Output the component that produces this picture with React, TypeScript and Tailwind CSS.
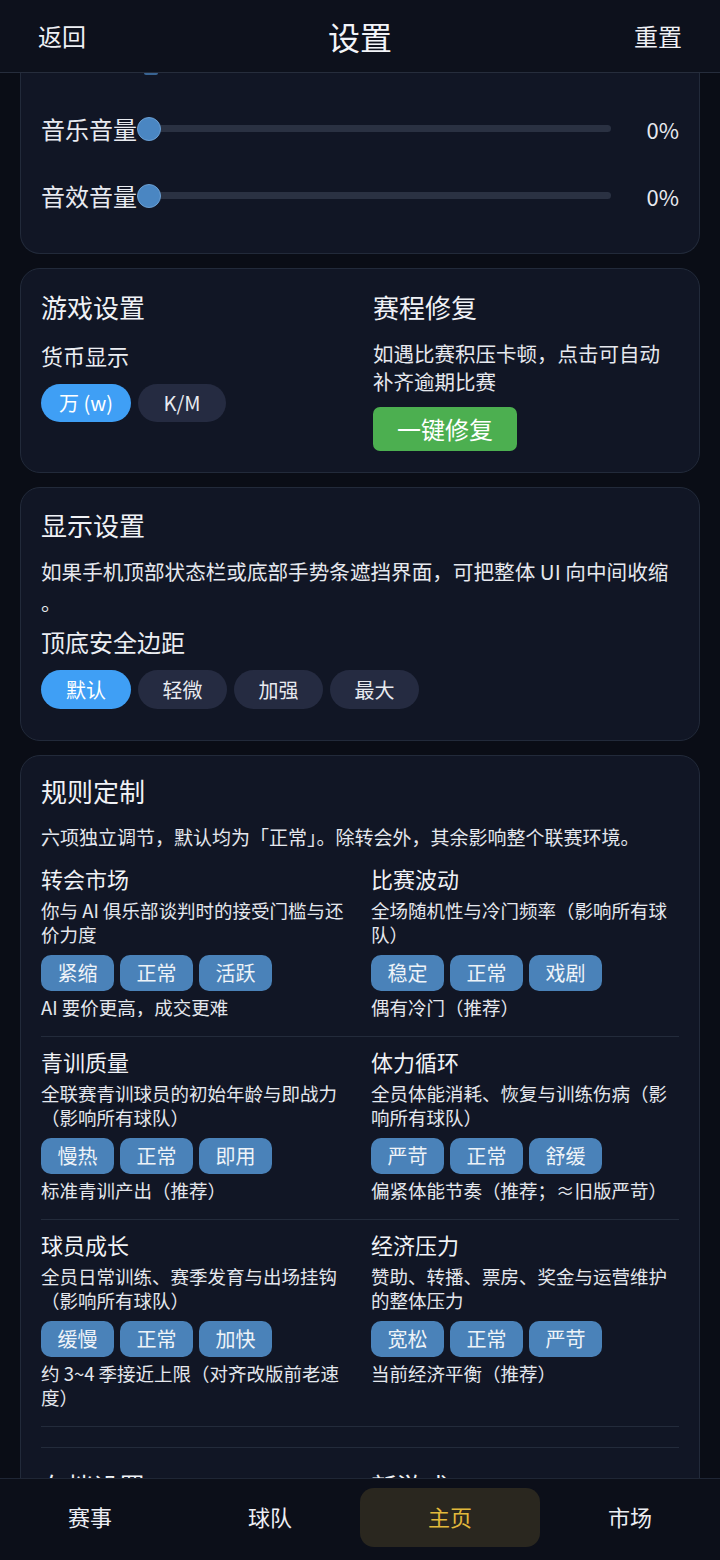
import React from "react";

type Rule = { title: string; desc: string; opts: string[]; result: React.ReactNode };

const rows: Rule[][] = [
  [
    { title: "转会市场", desc: "你与 AI 俱乐部谈判时的接受门槛与还价力度", opts: ["紧缩", "正常", "活跃"], result: "AI 要价更高，成交更难" },
    { title: "比赛波动", desc: "全场随机性与冷门频率（影响所有球队）", opts: ["稳定", "正常", "戏剧"], result: "偶有冷门（推荐）" },
  ],
  [
    { title: "青训质量", desc: "全联赛青训球员的初始年龄与即战力（影响所有球队）", opts: ["慢热", "正常", "即用"], result: "标准青训产出（推荐）" },
    { title: "体力循环", desc: "全员体能消耗、恢复与训练伤病（影响所有球队）", opts: ["严苛", "正常", "舒缓"], result: "偏紧体能节奏（推荐；≈旧版严苛）" },
  ],
  [
    { title: "球员成长", desc: "全员日常训练、赛季发育与出场挂钩（影响所有球队）", opts: ["缓慢", "正常", "加快"], result: "约 3~4 季接近上限（对齐改版前老速度）" },
    { title: "经济压力", desc: "赞助、转播、票房、奖金与运营维护的整体压力", opts: ["宽松", "正常", "严苛"], result: "当前经济平衡（推荐）" },
  ],
];

function Slider({ label }: { label: string }) {
  return (
    <div className="flex h-[67px] items-center">
      <span className="text-[24px] leading-[32px] text-[#e8eaf0]">{label}</span>
      <div className="relative flex h-[24px] flex-1 items-center">
        <div className="ml-[11px] mr-[2px] h-[7px] flex-1 rounded-full bg-[#2a3142]" />
        <div className="absolute left-0 top-0 h-[24px] w-[24px] rounded-full border border-[#6b9fd3] bg-[#4a86c2]" />
      </div>
      <span className="w-[66px] text-right text-[22px] leading-[30px] text-[#e8eaf0]">0%</span>
    </div>
  );
}

function RuleCol({ r }: { r: Rule }) {
  return (
    <div className="min-w-0">
      <div className="text-[22px] leading-[30px] text-[#f0f2f6]">{r.title}</div>
      <div className="mt-[5px] text-[18.5px] leading-[24px] text-[#e4e7ed]">{r.desc}</div>
      <div className="mt-[9px] flex gap-[6px]">
        {r.opts.map((o) => (
          <div
            key={o}
            className="flex h-[36px] w-[73px] items-center justify-center rounded-[10px] bg-[#4a82b9] text-[20px] text-[#eef3f8]"
          >
            {o}
          </div>
        ))}
      </div>
      <div className="mt-[4px] text-[18.5px] leading-[24px] text-[#e4e7ed]">{r.result}</div>
    </div>
  );
}

export default function App() {
  return (
    <div className="flex h-[1560px] w-[720px] flex-col overflow-hidden bg-[#0a0d16] font-['Noto_Sans_CJK_SC',sans-serif] text-[#e8eaf0]">
      {/* header */}
      <div className="relative z-10 flex h-[73px] shrink-0 items-center justify-between border-b border-[#262d3c] bg-[#0d111c] px-[38px]">
        <span className="text-[24px] leading-[32px] text-[#eef0f4]">返回</span>
        <span className="absolute left-1/2 -translate-x-1/2 text-[32px] leading-[40px] text-[#f2f4f8]">设置</span>
        <span className="text-[24px] leading-[32px] text-[#eef0f4]">重置</span>
      </div>

      {/* scrolling content (scrolled: first card's top is above the fold) */}
      <div className="flex-1 overflow-hidden">
        <div className="flex flex-col gap-[14px] px-[20px]">
          {/* audio card (top cut off by scroll) */}
          <div className="rounded-b-[20px] border-x border-b border-[#222a3a] bg-[#111625] px-[20px] pb-[24px]">
            <div className="ml-[103px] h-[2px] w-[14px] rounded-b-full bg-[#4a86c2]/70" />
            <div className="mt-[20px]">
              <Slider label="音乐音量" />
              <Slider label="音效音量" />
            </div>
          </div>

          {/* game settings */}
          <div className="grid grid-cols-2 gap-x-[26px] rounded-[20px] border border-[#222a3a] bg-[#111625] px-[20px] pb-[21px] pt-[20px]">
            <div>
              <div className="text-[26px] leading-[36px] text-[#f0f2f6]">游戏设置</div>
              <div className="mt-[14px] text-[22px] leading-[32px] text-[#eceef3]">货币显示</div>
              <div className="mt-[13px] flex gap-[7px]">
                <div className="flex h-[38px] w-[90px] items-center justify-center rounded-full bg-[#3f9ff5] text-[20px] text-white">万 (w)</div>
                <div className="flex h-[38px] w-[88px] items-center justify-center rounded-full bg-[#252b41] text-[20px] text-[#e8eaf0]">K/M</div>
              </div>
            </div>
            <div>
              <div className="text-[26px] leading-[36px] text-[#f0f2f6]">赛程修复</div>
              <div className="mt-[14px] text-[20.5px] leading-[28px] text-[#e6e8ee]">如遇比赛积压卡顿，点击可自动补齐逾期比赛</div>
              <div className="mt-[12px] flex h-[44px] w-[144px] items-center justify-center rounded-[7px] bg-[#4caf50] text-[24px] text-white">一键修复</div>
            </div>
          </div>

          {/* display settings */}
          <div className="rounded-[20px] border border-[#222a3a] bg-[#111625] px-[20px] pb-[31px] pt-[19px]">
            <div className="text-[26px] leading-[36px] text-[#f0f2f6]">显示设置</div>
            <div className="mt-[13px] text-[20.6px] leading-[31px] text-[#e6e8ee]">
              如果手机顶部状态栏或底部手势条遮挡界面，可把整体 UI 向中间收缩
              <br />。
            </div>
            <div className="mt-[7px] text-[24px] leading-[34px] text-[#eceef3]">顶底安全边距</div>
            <div className="mt-[11px] flex gap-[7px]">
              {["默认", "轻微", "加强", "最大"].map((t, i) => (
                <div
                  key={t}
                  className={
                    i === 0
                      ? "flex h-[39px] w-[90px] items-center justify-center rounded-full bg-[#3f9ff5] text-[20px] text-white"
                      : "flex h-[39px] w-[89px] items-center justify-center rounded-full bg-[#252b41] text-[20px] text-[#e8eaf0]"
                  }
                >
                  {t}
                </div>
              ))}
            </div>
          </div>

          {/* rules */}
          <div className="rounded-[20px] border border-[#222a3a] bg-[#111625] px-[20px] pb-[40px] pt-[17px]">
            <div className="text-[26px] leading-[36px] text-[#f0f2f6]">规则定制</div>
            <div className="mt-[15px] text-[19px] leading-[26px] text-[#e4e7ed]">
              六项独立调节，默认均为「正常」。除转会外，其余影响整个联赛环境。
            </div>
            <div className="mt-[4px]">
              {rows.map((row, i) => (
                <div key={i} className="grid grid-cols-2 gap-x-[22px] border-b border-[#232b3b] pb-[17px] pt-[9px]">
                  <RuleCol r={row[0]} />
                  <RuleCol r={row[1]} />
                </div>
              ))}
            </div>
            <div className="mt-[20px] border-t border-[#232b3b]" />
            <div className="grid grid-cols-2 gap-x-[22px] pt-[20px]">
              <div className="text-[26px] leading-[36px] text-[#f0f2f6]">存档设置</div>
              <div className="text-[26px] leading-[36px] text-[#f0f2f6]">新游戏</div>
            </div>
          </div>
        </div>
      </div>

      {/* bottom nav */}
      <div className="relative z-10 flex h-[82px] shrink-0 items-start border-t border-[#1f2635] bg-[#0c0f19] pt-[9px]">
        {["赛事", "球队", "主页", "市场"].map((t, i) => (
          <div
            key={t}
            className={
              i === 2
                ? "flex h-[59px] w-[180px] items-center justify-center rounded-[14px] bg-[#2a271f] pb-[3px] text-[22px] text-[#e2b93b]"
                : "flex h-[59px] w-[180px] items-center justify-center pb-[3px] text-[22px] text-[#eceef3]"
            }
          >
            {t}
          </div>
        ))}
      </div>
    </div>
  );
}
